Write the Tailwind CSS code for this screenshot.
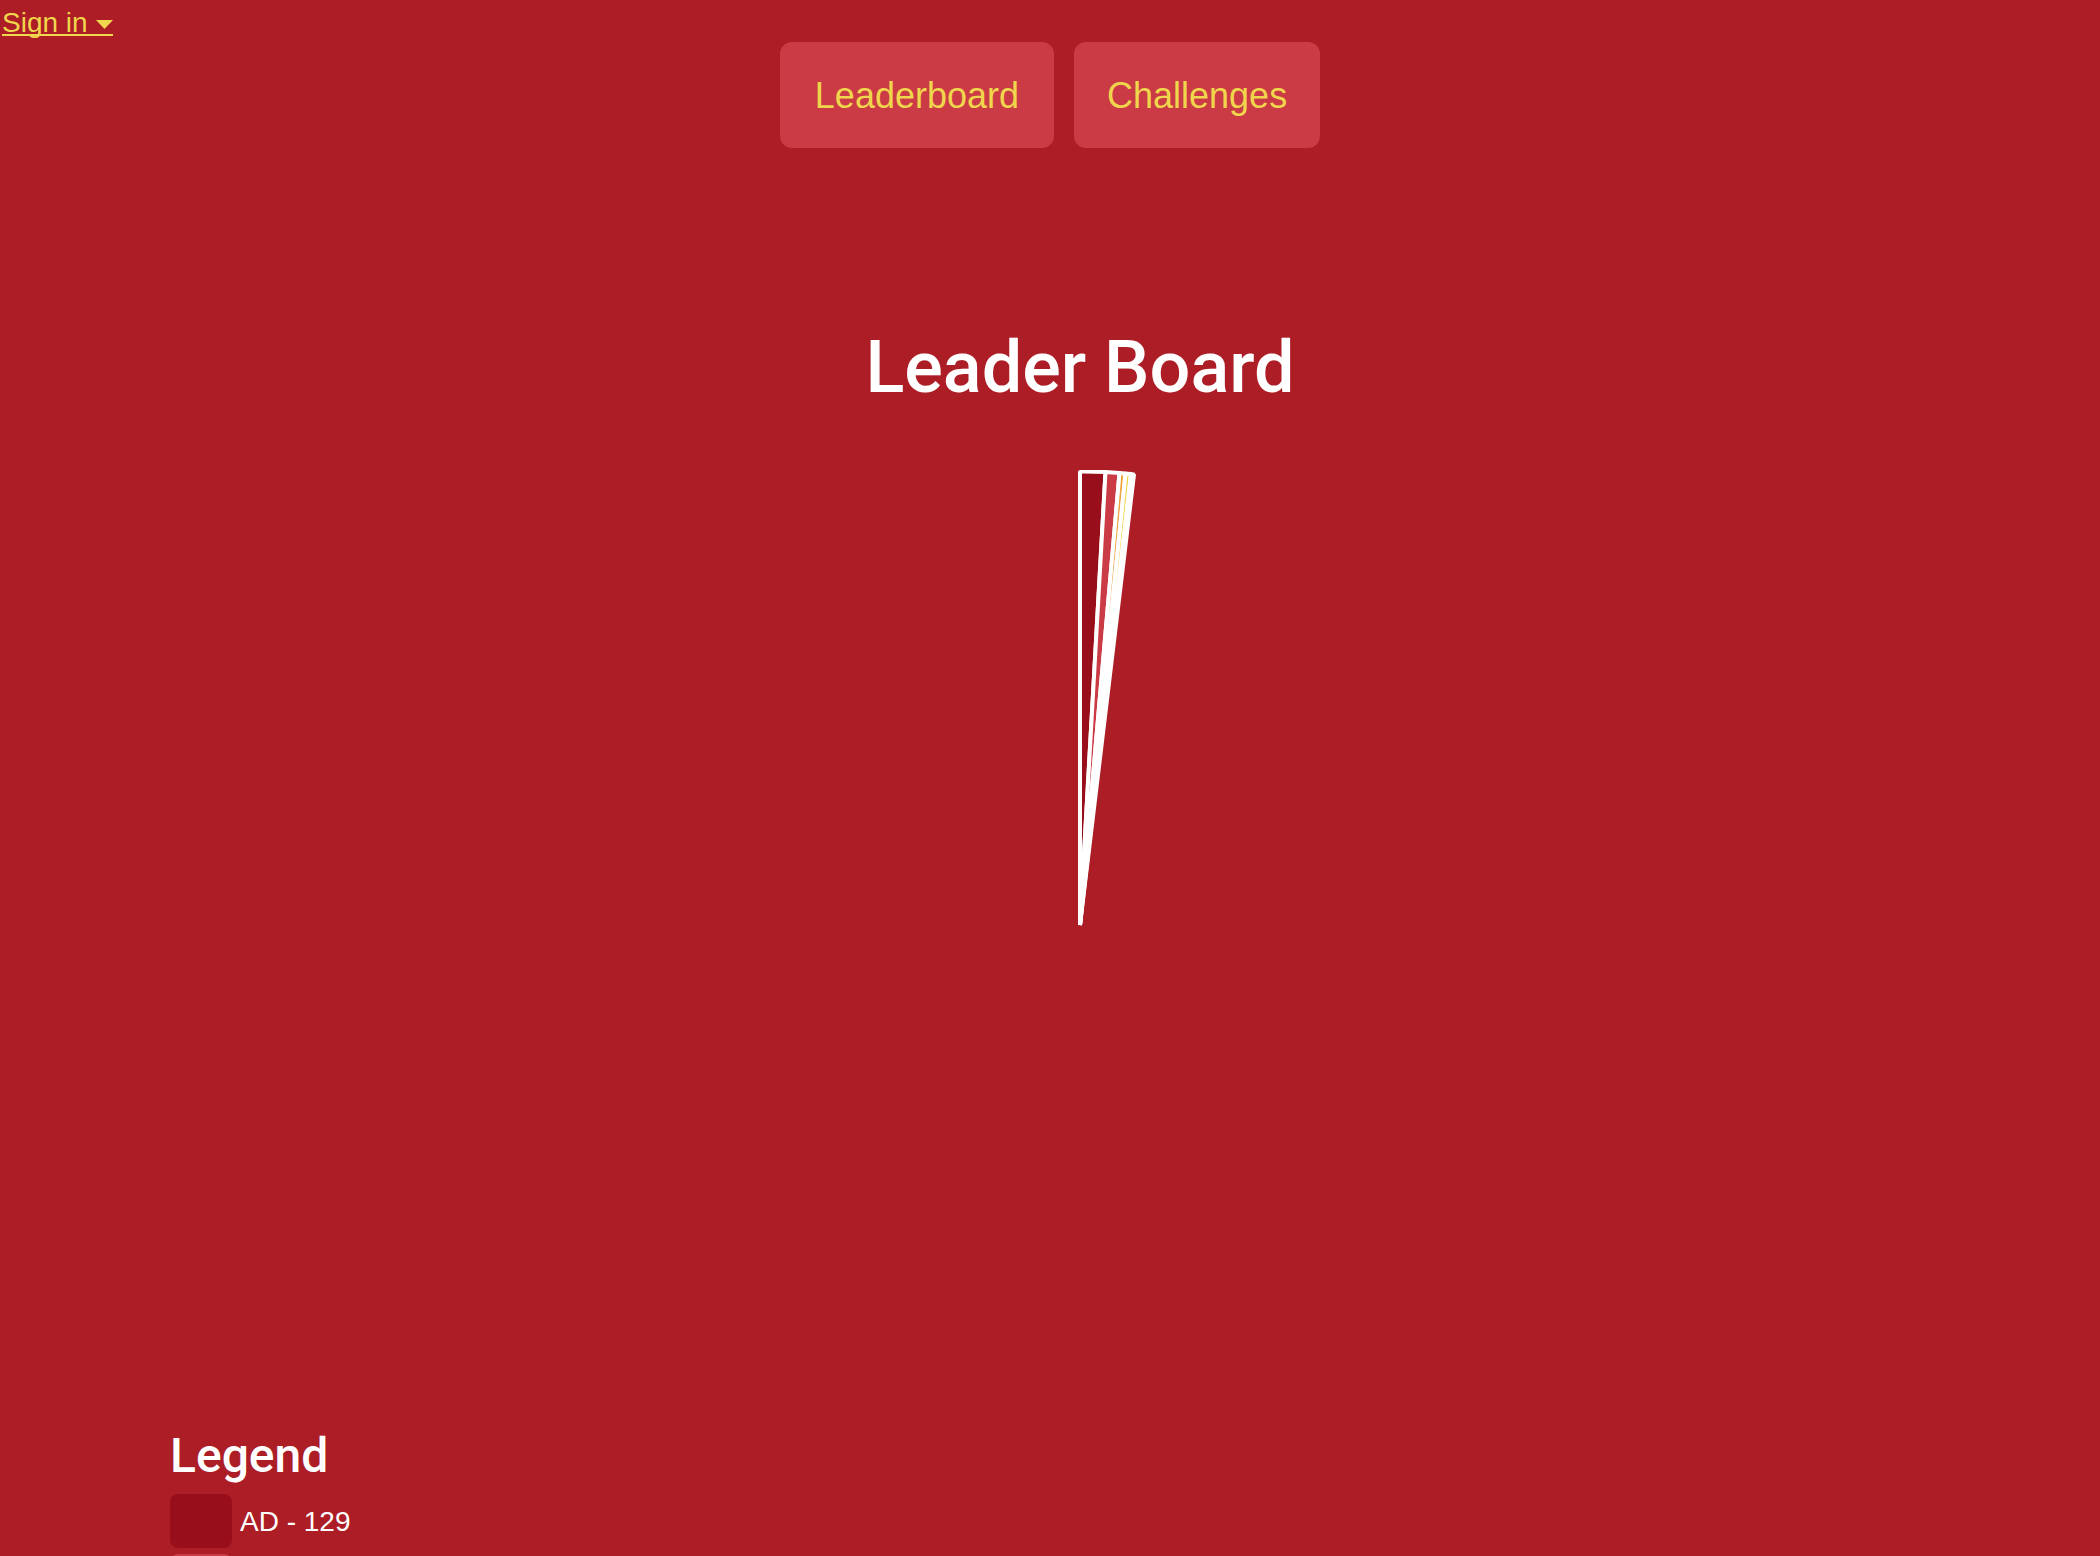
<!DOCTYPE html>
<html lang="en">
<head>
<meta charset="utf-8">
<title>Leader Board</title>
<script src="https://cdn.jsdelivr.net/npm/@tailwindcss/browser@4"></script>
</head>
<body class="h-screen overflow-hidden bg-[#ac1d26] font-['Liberation_Sans',Arial,sans-serif] text-white">
  <header>
    <div class="flex h-[42px] items-start pl-0.5">
      <a href="#signin" class="flex h-9 items-center gap-2 border-b-2 border-[#f0d64c] pt-3 text-[28px] leading-7 text-[#f0d64c]">
        Sign in
        <svg class="mt-0.5 h-[9px] w-[17px]" viewBox="0 0 17 9" fill="currentColor" aria-hidden="true"><path d="M0 0H17L8.5 9Z"/></svg>
      </a>
    </div>
    <nav class="flex justify-center gap-5 text-4xl text-[#f0d64c]">
      <a href="#leaderboard" class="flex h-[106px] items-center rounded-xl bg-[#cb3b45] px-[35px] pt-0.5">Leaderboard</a>
      <a href="#challenges" class="flex h-[106px] items-center rounded-xl bg-[#cb3b45] px-[33px] pt-0.5">Challenges</a>
    </nav>
  </header>
  <main class="pt-[178px] pl-[60px]">
    <h1 class="text-center font-[Roboto,sans-serif] text-[72px] leading-[84px] font-medium">Leader Board</h1>
    <svg class="mx-auto mt-[60px] block h-[910px] w-[912px]" viewBox="-456 -455 912 910" stroke="#fff" stroke-width="4" stroke-linejoin="bevel" role="img" aria-label="Leader board chart">
      <path fill="#980f1b" d="M0 0V-453.5A454 454 0 0 1 25.5 -453Z"/>
      <path fill="#cb3b45" d="M0 0L25.5 -453A454 454 0 0 1 39.5 -452Z"/>
      <path fill="#eda33f" d="M0 0L39.5 -452A454 454 0 0 1 45.5 -451.5Z"/>
      <path fill="#f0d64c" d="M0 0L45.5 -451.5A454 454 0 0 1 51 -451Z"/>
      <path fill="#fff" d="M0 0L51 -451A454 454 0 0 1 54 -450.5Z"/>
    </svg>
    <section class="pt-12 pl-[110px]">
      <h2 class="font-[Roboto,sans-serif] text-5xl leading-[56px] font-medium">Legend</h2>
      <ul class="flex flex-col gap-1.5 pt-2.5 text-[28px]">
        <li class="flex items-center gap-2"><span class="h-[54px] w-[62px] rounded-lg bg-[#980f1b]"></span><span class="pt-0.5">AD - 129</span></li>
        <li class="flex items-center gap-2"><span class="h-[54px] w-[62px] rounded-lg bg-[#cb3b45]"></span></li>
      </ul>
    </section>
  </main>
</body>
</html>
